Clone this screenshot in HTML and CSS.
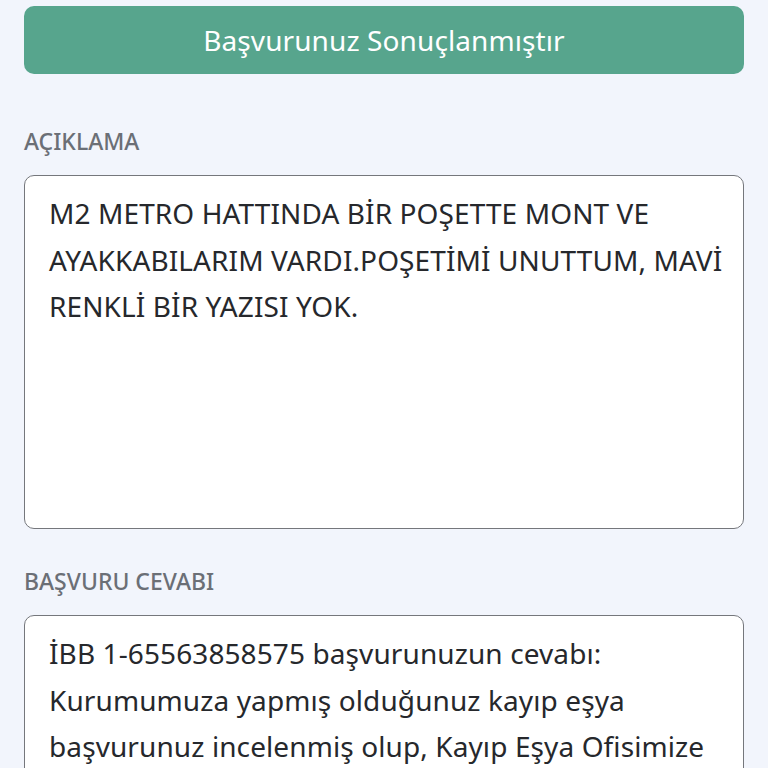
FILE: index.html
```html
<!DOCTYPE html>
<html lang="tr">
<head>
<meta charset="utf-8">
<link rel="stylesheet" href="styles.css">
</head>
<body>
<div class="page">
  <div class="status-btn">Başvurunuz Sonuçlanmıştır</div>
  <div class="field">
    <div class="label">AÇIKLAMA</div>
    <div class="box tall">M2 METRO HATTINDA BİR POŞETTE MONT VE<br>AYAKKABILARIM VARDI.POŞETİMİ UNUTTUM, MAVİ<br>RENKLİ BİR YAZISI YOK.</div>
  </div>
  <div class="field">
    <div class="label second">BAŞVURU CEVABI</div>
    <div class="box">İBB 1-65563858575 başvurunuzun cevabı:<br>Kurumumuza yapmış olduğunuz kayıp eşya<br>başvurunuz incelenmiş olup, Kayıp Eşya Ofisimize</div>
  </div>
</div>
</body>
</html>
```
FILE: styles.css
```css
html, body {
  margin: 0;
  padding: 0;
  background: #f2f5fc;
  font-family: "Noto Sans", "Open Sans", sans-serif;
  overflow: hidden;
  height: 768px;
}
.page {
  padding: 6px 24px 0 24px;
  display: flex;
  flex-direction: column;
  height: 762px;
  overflow: hidden;
}
.status-btn {
  flex: none;
  height: 68px;
  border-radius: 10px;
  background: #57a58d;
  color: #ffffff;
  font-size: 28px;
  letter-spacing: 0.1px;
  display: flex;
  align-items: center;
  justify-content: center;
}
.field {
  flex: none;
  display: flex;
  flex-direction: column;
}
.label {
  margin-top: 53px;
  height: 48px;
  color: #6b6f76;
  font-size: 23px;
  font-weight: 500;
  line-height: 28px;
}
.label.second {
  margin-top: 38px;
}
.box {
  background: #ffffff;
  border: 1.5px solid #75777c;
  border-radius: 10px;
  padding: 14px 20px 20px 24px;
  font-size: 28px;
  letter-spacing: 0.1px;
  line-height: 46.5px;
  color: #26282c;
  white-space: nowrap;
}
.box.tall {
  height: 318px;
}
```
